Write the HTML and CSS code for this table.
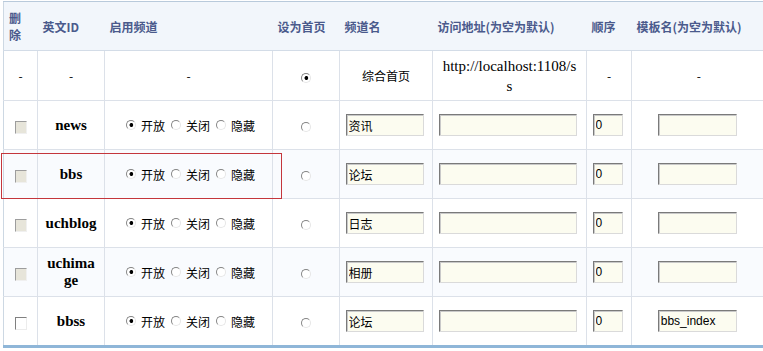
FILE: index.html
```html
<!DOCTYPE html>
<html lang="zh-CN">
<head>
<meta charset="utf-8">
<title>频道管理</title>
<link rel="stylesheet" href="styles.css">
</head>
<body>
<div class="page">
  <table class="channels">
    <colgroup>
      <col class="c-del"><col class="c-id"><col class="c-status"><col class="c-home">
      <col class="c-name"><col class="c-url"><col class="c-order"><col class="c-tpl">
    </colgroup>
    <thead>
      <tr>
        <th>删除</th><th>英文ID</th><th>启用频道</th><th>设为首页</th>
        <th>频道名</th><th>访问地址(为空为默认)</th><th>顺序</th><th>模板名(为空为默认)</th>
      </tr>
    </thead>
    <tbody>
      <tr class="row-home">
        <td>-</td><td>-</td><td>-</td>
        <td><input class="radio" type="radio" name="home" checked></td>
        <td>综合首页</td>
        <td class="url">http://localhost:1108/ss</td>
        <td>-</td><td>-</td>
      </tr>
      <tr>
        <td><input class="check" type="checkbox" disabled></td>
        <td class="id">news</td>
        <td class="status"><span class="opts"><label><input class="radio" type="radio" name="s1" checked>开放</label><label><input class="radio" type="radio" name="s1">关闭</label><label><input class="radio" type="radio" name="s1">隐藏</label></span></td>
        <td><input class="radio" type="radio" name="home"></td>
        <td class="field"><input class="txt w-name" type="text" value="资讯"></td>
        <td class="field"><input class="txt w-url" type="text"></td>
        <td class="field"><input class="txt w-order" type="text" value="0"></td>
        <td class="field"><input class="txt w-tpl" type="text"></td>
      </tr>
      <tr class="alt">
        <td><input class="check" type="checkbox" disabled></td>
        <td class="id">bbs</td>
        <td class="status"><span class="opts"><label><input class="radio" type="radio" name="s2" checked>开放</label><label><input class="radio" type="radio" name="s2">关闭</label><label><input class="radio" type="radio" name="s2">隐藏</label></span></td>
        <td><input class="radio" type="radio" name="home"></td>
        <td class="field"><input class="txt w-name" type="text" value="论坛"></td>
        <td class="field"><input class="txt w-url" type="text"></td>
        <td class="field"><input class="txt w-order" type="text" value="0"></td>
        <td class="field"><input class="txt w-tpl" type="text"></td>
      </tr>
      <tr>
        <td><input class="check" type="checkbox" disabled></td>
        <td class="id">uchblog</td>
        <td class="status"><span class="opts"><label><input class="radio" type="radio" name="s3" checked>开放</label><label><input class="radio" type="radio" name="s3">关闭</label><label><input class="radio" type="radio" name="s3">隐藏</label></span></td>
        <td><input class="radio" type="radio" name="home"></td>
        <td class="field"><input class="txt w-name" type="text" value="日志"></td>
        <td class="field"><input class="txt w-url" type="text"></td>
        <td class="field"><input class="txt w-order" type="text" value="0"></td>
        <td class="field"><input class="txt w-tpl" type="text"></td>
      </tr>
      <tr class="alt">
        <td><input class="check" type="checkbox" disabled></td>
        <td class="id">uchimage</td>
        <td class="status"><span class="opts"><label><input class="radio" type="radio" name="s4" checked>开放</label><label><input class="radio" type="radio" name="s4">关闭</label><label><input class="radio" type="radio" name="s4">隐藏</label></span></td>
        <td><input class="radio" type="radio" name="home"></td>
        <td class="field"><input class="txt w-name" type="text" value="相册"></td>
        <td class="field"><input class="txt w-url" type="text"></td>
        <td class="field"><input class="txt w-order" type="text" value="0"></td>
        <td class="field"><input class="txt w-tpl" type="text"></td>
      </tr>
      <tr class="last">
        <td><input class="check" type="checkbox"></td>
        <td class="id">bbss</td>
        <td class="status"><span class="opts"><label><input class="radio" type="radio" name="s5" checked>开放</label><label><input class="radio" type="radio" name="s5">关闭</label><label><input class="radio" type="radio" name="s5">隐藏</label></span></td>
        <td><input class="radio" type="radio" name="home"></td>
        <td class="field"><input class="txt w-name" type="text" value="论坛"></td>
        <td class="field"><input class="txt w-url" type="text"></td>
        <td class="field"><input class="txt w-order" type="text" value="0"></td>
        <td class="field"><input class="txt w-tpl" type="text" value="bbs_index"></td>
      </tr>
    </tbody>
  </table>
  <div class="mark"></div>
</div>
</body>
</html>
```

FILE: styles.css
```css
html, body {
  margin: 0;
  padding: 0;
  background: #ffffff;
  overflow: hidden;
}

body {
  font: 12px "Liberation Sans", "Noto Sans CJK SC", sans-serif;
  color: #000;
}

.page {
  position: relative;
  padding: 1px 0 0 3px;
}

.channels {
  border-collapse: collapse;
  table-layout: fixed;
  width: 762px;
}

.c-del { width: 34px; }
.c-id { width: 67px; }
.c-status { width: 168px; }
.c-home { width: 67px; }
.c-name { width: 93px; }
.c-url { width: 154px; }
.c-order { width: 45px; }
.c-tpl { width: 134px; }

.channels th {
  height: 48px;
  padding: 0 5px;
  background: #f2f6fb;
  color: #4a5a8c;
  font: bold 12px "Noto Sans CJK SC", "Liberation Sans", sans-serif;
  text-align: left;
  line-height: 17px;
  border-top: 1px solid #b9cadb;
  border-bottom: 1px solid #d3dce7;
}

.channels th:first-child {
  border-left: 1px solid #cdd8e3;
}

.channels td {
  height: 48px;
  padding: 0 5px;
  text-align: center;
  vertical-align: middle;
  border: 1px solid #dce1e9;
  font-family: "Noto Sans CJK SC", "Liberation Sans", sans-serif;
  font-size: 12px;
  line-height: 17px;
}

.channels td:first-child {
  border-left-color: #cdd8e3;
}

.channels td:last-child {
  border-right: none;
}

.channels td.status {
  padding: 0 3px 0 7px;
}

.channels td.field {
  padding: 0 7px 0 4px;
}

.channels .row-home td {
  height: 49px;
}

.channels tr.alt td {
  background: #f9fbfe;
}

.channels tr.last td {
  border-bottom: 3px solid #8fb6d8;
}

.channels td.id {
  padding: 0 6px;
  font: bold 15px "Liberation Serif", serif;
  line-height: 17px;
  word-break: break-all;
}

.channels td.url {
  padding: 0 8px;
  font: 15px "Liberation Serif", serif;
  line-height: 20px;
  word-break: break-all;
}

.opts {
  display: inline-flex;
  align-items: center;
  gap: 6px;
  white-space: nowrap;
}

.opts label {
  display: inline-flex;
  align-items: center;
  gap: 5px;
}

.radio {
  appearance: none;
  -webkit-appearance: none;
  display: inline-block;
  box-sizing: border-box;
  width: 10px;
  height: 10px;
  margin: 0;
  border-radius: 50%;
  border: 1px solid;
  border-color: #858585 #e6e6e6 #e6e6e6 #858585;
  background: #ffffff;
  vertical-align: middle;
}

.radio:checked {
  background: radial-gradient(circle at 55% 50%, #000 0, #000 1.6px, #fff 2.2px);
}

.check {
  appearance: none;
  -webkit-appearance: none;
  display: inline-block;
  box-sizing: border-box;
  width: 12px;
  height: 13px;
  margin: 0;
  border: 1px solid;
  border-color: #9d9d9d #f0f0f0 #f0f0f0 #9d9d9d;
  background: #e7e5da;
  vertical-align: middle;
}

.check:enabled {
  border-color: #808080 #ececec #ececec #808080;
  background: #ffffff;
}

.txt {
  box-sizing: border-box;
  height: 22px;
  margin: 0;
  padding: 0 2px;
  border: 1px solid;
  border-color: #7a7a7a #dadada #dadada #7a7a7a;
  box-shadow: inset 1px 1px 0 #c9c9c9;
  background: #fcfcf0;
  font: 12px "Liberation Sans", "Noto Sans CJK SC", sans-serif;
  color: #000;
  vertical-align: middle;
}

.w-name { width: 78px; }
.w-url { width: 138px; }
.w-order { width: 30px; }
.w-tpl { width: 79px; }

.mark {
  position: absolute;
  left: 1px;
  top: 153px;
  width: 281px;
  height: 46px;
  box-sizing: border-box;
  border: 1px solid #c4363c;
  pointer-events: none;
}
```
